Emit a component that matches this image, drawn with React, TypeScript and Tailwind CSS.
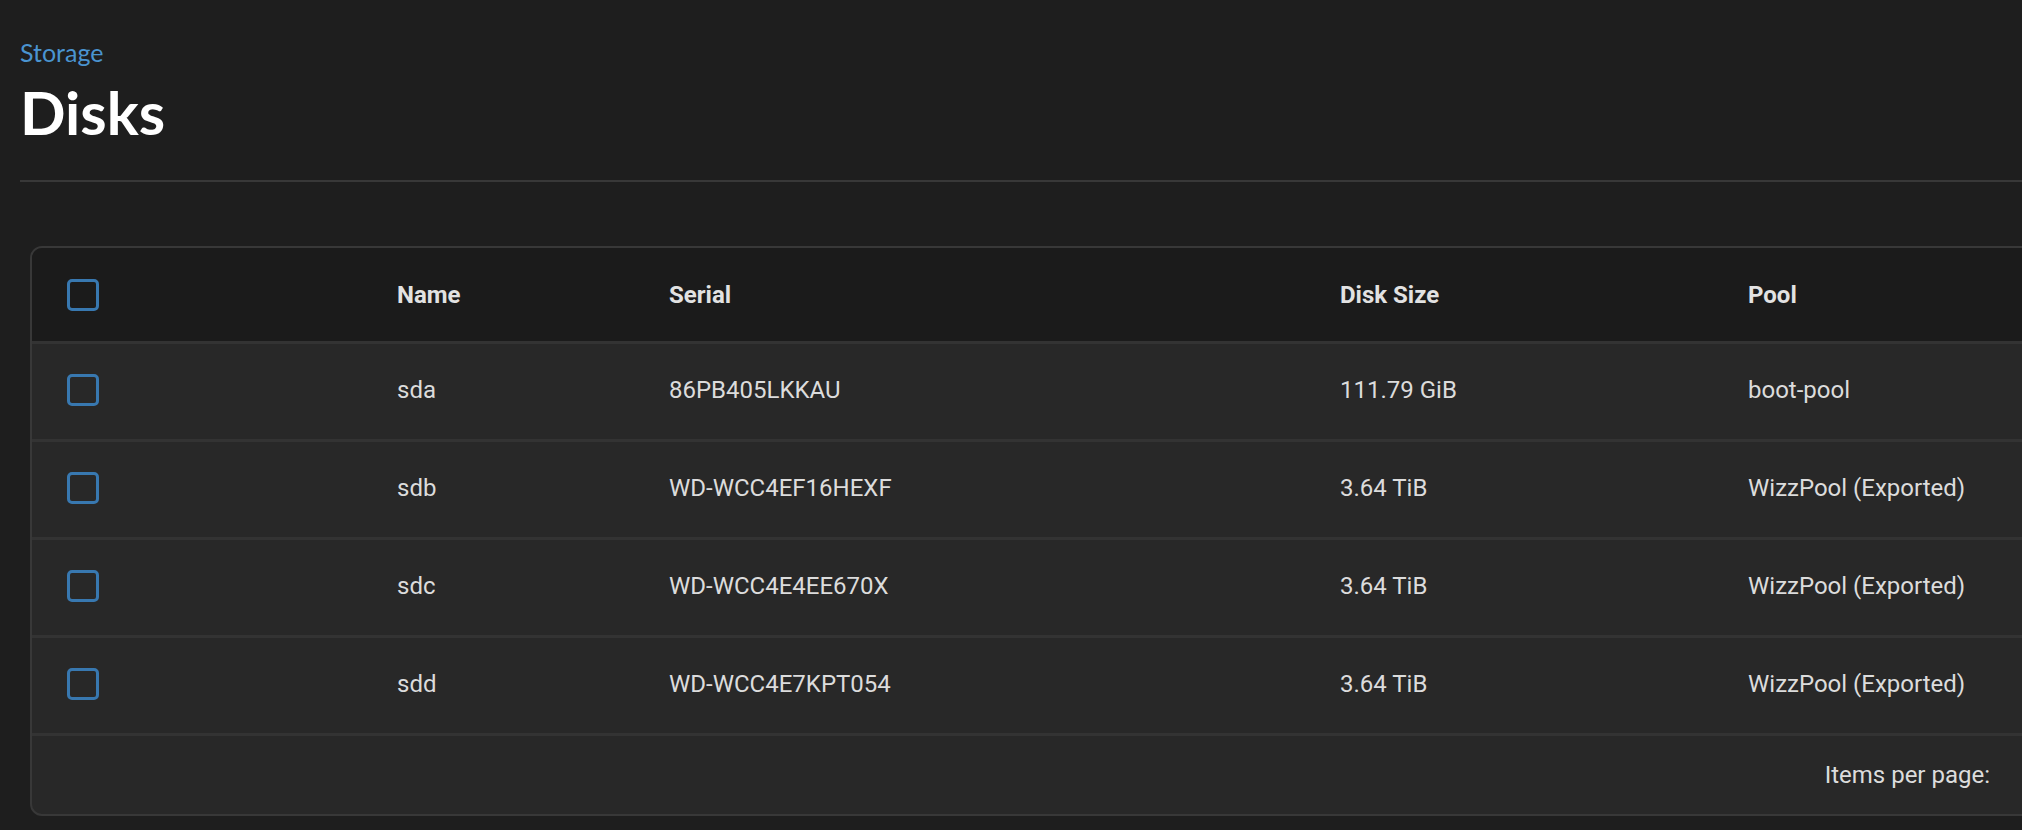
import React from "react";

const DISKS = [
  { name: "sda", serial: "86PB405LKKAU", size: "111.79 GiB", pool: "boot-pool" },
  { name: "sdb", serial: "WD-WCC4EF16HEXF", size: "3.64 TiB", pool: "WizzPool (Exported)" },
  { name: "sdc", serial: "WD-WCC4E4EE670X", size: "3.64 TiB", pool: "WizzPool (Exported)" },
  { name: "sdd", serial: "WD-WCC4E7KPT054", size: "3.64 TiB", pool: "WizzPool (Exported)" },
];

const COLS = "grid grid-cols-[365px_272px_671px_408px_1fr] items-center";

function Checkbox() {
  return (
    <span
      className="block w-[32px] h-[32px] rounded-[5px] border-[3px] border-[#3878b0]"
      aria-hidden="true"
    />
  );
}

export default function App() {
  return (
    <div className="w-full min-h-[830px] overflow-hidden bg-[#1e1e1e] pl-[20px] pt-[40px] font-['Roboto',sans-serif]">
      {/* ── Page header ── */}
      <div className="font-['Lato',sans-serif] text-[25px] leading-[25px] text-[#4a94d0]">
        Storage
      </div>
      <h1 className="mt-[17px] font-['Lato',sans-serif] font-bold text-[60px] leading-[60px] text-white">
        Disks
      </h1>
      <div className="mt-[38px] h-[2px] bg-[#383838]" />

      {/* ── Disks table ── */}
      <div className="mt-[64px] ml-[10px] w-[2040px] rounded-[12px] border-2 border-[#383838] bg-[#282828] overflow-hidden text-[24px] text-[#dcdcdc]">
        <div className={`${COLS} h-[93px] bg-[#1b1b1b] font-bold text-[#e2e2e2]`}>
          <div className="pl-[35px]">
            <Checkbox />
          </div>
          <div>Name</div>
          <div>Serial</div>
          <div>Disk Size</div>
          <div>Pool</div>
        </div>

        {DISKS.map((disk) => (
          <div key={disk.name} className={`${COLS} h-[98px] pb-[3px] border-t-[3px] border-[#333333]`}>
            <div className="pl-[35px]">
              <Checkbox />
            </div>
            <div>{disk.name}</div>
            <div>{disk.serial}</div>
            <div>{disk.size}</div>
            <div>{disk.pool}</div>
          </div>
        ))}

        <div className="flex h-[81px] items-center justify-end border-t-[3px] border-[#333333] pr-[78px]">
          <span>Items per page:</span>
        </div>
      </div>
    </div>
  );
}
